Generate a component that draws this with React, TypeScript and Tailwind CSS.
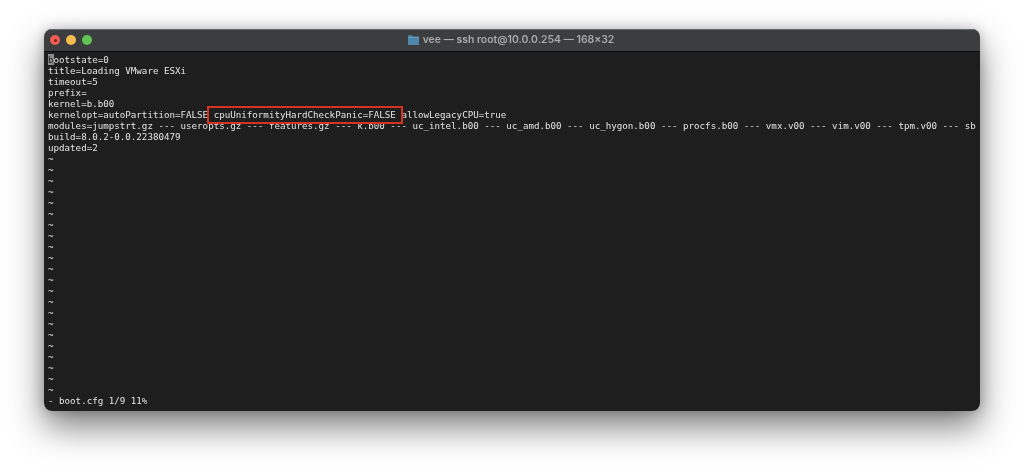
const lines = [
  "ootstate=0",
  "title=Loading VMware ESXi",
  "timeout=5",
  "prefix=",
  "kernel=b.b00",
  "kernelopt=autoPartition=FALSE cpuUniformityHardCheckPanic=FALSE allowLegacyCPU=true",
  "modules=jumpstrt.gz --- useropts.gz --- features.gz --- k.b00 --- uc_intel.b00 --- uc_amd.b00 --- uc_hygon.b00 --- procfs.b00 --- vmx.v00 --- vim.v00 --- tpm.v00 --- sb",
  "build=8.0.2-0.0.22380479",
  "updated=2",
];

function Row({ children }: { children: React.ReactNode }) {
  return <div className="h-[11.03px] leading-[11px] whitespace-pre">{children}</div>;
}

export default function App() {
  return (
    <div className="h-[469px] w-[1024px] overflow-hidden bg-white pl-[44px] pt-[29px]">
      <div className="relative h-[382px] w-[936px] overflow-hidden rounded-[8px] shadow-[0_16px_34px_rgba(0,0,0,0.5),0_0_12px_rgba(0,0,0,0.22)]">
        <div className="flex h-[23px] items-center border-b border-b-[#0c0c0c] bg-[#3c3d3f] shadow-[inset_0_1px_0_#66676a]">
          <div className="flex gap-[6px] pl-[6px]">
            <div className="flex h-[10px] w-[10px] items-center justify-center rounded-full bg-[#ec5f57]">
              <div className="h-[3px] w-[3px] rounded-full bg-[#8c1c16]" />
            </div>
            <div className="h-[10px] w-[10px] rounded-full bg-[#f5bd4f]" />
            <div className="h-[10px] w-[10px] rounded-full bg-[#61c554]" />
          </div>
          <div className="flex flex-1 items-center justify-center gap-[4px] pr-[50px] font-['Inter',sans-serif] text-[10.4px] font-semibold text-[#a9abad] blur-[0.3px]">
            <svg width="11" height="10" viewBox="0 0 11 10" className="shrink-0">
              <path d="M0 1.2C0 .6.4.2 1 .2h2.6l1 1.2H10c.6 0 1 .4 1 1V9c0 .6-.4 1-1 1H1c-.6 0-1-.4-1-1z" fill="#4f86ac" />
              <path d="M0 2.4h11" stroke="#74a6c8" strokeWidth=".7" />
            </svg>
            <span>vee — ssh root@10.0.0.254 — 168×32</span>
          </div>
        </div>
        <div className="h-[359px] bg-[#1e1e1e] pl-[4px] pt-[1.6px] font-['DejaVu_Sans_Mono',monospace] text-[9.18px] text-[#e4e4e4]">
          <div className="blur-[0.3px]">
            <Row>
              <span className="bg-[#8f8f8f] text-[#1e1e1e]">b</span>
              {lines[0]}
            </Row>
            {lines.slice(1).map((l) => (
              <Row key={l}>{l}</Row>
            ))}
            {Array.from({ length: 22 }, (_, i) => (
              <Row key={i}>~</Row>
            ))}
            <Row>- boot.cfg 1/9 11%</Row>
          </div>
        </div>
        <div className="absolute left-[163px] top-[77px] h-[18px] w-[196px] border-2 border-[#d5331f]" />
      </div>
    </div>
  );
}
